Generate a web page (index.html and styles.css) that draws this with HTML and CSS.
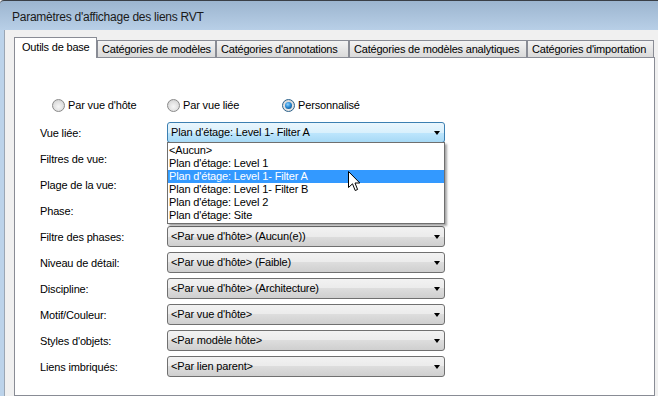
FILE: index.html
```html
<!DOCTYPE html>
<html lang="fr">

<head>
    <meta charset="UTF-8">
    <title>Paramètres d'affichage des liens RVT</title>
    <link rel="stylesheet" href="styles.css">
</head>

<body>
    <div class="window">
        <div class="titlebar">Paramètres d'affichage des liens RVT</div>

        <div class="dialog">
            <div class="tabs">
                <div class="tab active" style="width: 83px">Outils de base</div>
                <div class="tab" style="width: 119px">Catégories de modèles</div>
                <div class="tab" style="width: 133px">Catégories d'annotations</div>
                <div class="tab" style="width: 178px">Catégories de modèles analytiques</div>
                <div class="tab" style="width: 127px">Catégories d'importation</div>
            </div>

            <div class="panel">
                <div class="radios">
                    <label class="radio"><span class="dot"></span>Par vue d'hôte</label>
                    <label class="radio"><span class="dot"></span>Par vue liée</label>
                    <label class="radio"><span class="dot checked"></span>Personnalisé</label>
                </div>

                <div class="form">
                    <div class="label">Vue liée:</div>
                    <div class="combo focus">
                        Plan d'étage: Level 1- Filter A<span class="arrow"></span>
                        <!-- liste déroulante ouverte -->
                        <ul class="droplist">
                            <li>&lt;Aucun&gt;</li>
                            <li>Plan d'étage: Level 1</li>
                            <li class="selected">Plan d'étage: Level 1- Filter A</li>
                            <li>Plan d'étage: Level 1- Filter B</li>
                            <li>Plan d'étage: Level 2</li>
                            <li>Plan d'étage: Site</li>
                        </ul>
                    </div>

                    <!-- ces trois listes sont cachées sous la liste ouverte -->
                    <div class="label">Filtres de vue:</div>
                    <div class="combo"><span class="arrow"></span></div>

                    <div class="label">Plage de la vue:</div>
                    <div class="combo"><span class="arrow"></span></div>

                    <div class="label">Phase:</div>
                    <div class="combo"><span class="arrow"></span></div>

                    <div class="label">Filtre des phases:</div>
                    <div class="combo">&lt;Par vue d'hôte&gt; (Aucun(e))<span class="arrow"></span></div>

                    <div class="label">Niveau de détail:</div>
                    <div class="combo">&lt;Par vue d'hôte&gt; (Faible)<span class="arrow"></span></div>

                    <div class="label">Discipline:</div>
                    <div class="combo">&lt;Par vue d'hôte&gt; (Architecture)<span class="arrow"></span></div>

                    <div class="label">Motif/Couleur:</div>
                    <div class="combo">&lt;Par vue d'hôte&gt;<span class="arrow"></span></div>

                    <div class="label">Styles d'objets:</div>
                    <div class="combo">&lt;Par modèle hôte&gt;<span class="arrow"></span></div>

                    <div class="label">Liens imbriqués:</div>
                    <div class="combo">&lt;Par lien parent&gt;<span class="arrow"></span></div>
                </div>
            </div>
        </div>

        <!-- pointeur de souris -->
        <svg class="cursor" width="13" height="21" viewBox="0 0 13 21">
            <path d="M0.5 0.5 L0.5 16.5 L4.5 12.8 L7.2 19.5 L9.6 18.5 L7 12 L11.8 12 Z"
                fill="#fff" stroke="#000" stroke-width="1" stroke-linejoin="miter" />
        </svg>
    </div>
</body>

</html>
```

FILE: styles.css
```css
html,
body {
    margin: 0;
    padding: 0;
    background: #fff;
}

.window {
    position: relative;
    width: 658px;
    height: 396px;
    overflow: hidden;
    background-color: #f0f0f0;
    font-family: "Liberation Sans", Arial, sans-serif;
    font-size: 11px;
    letter-spacing: -0.15px;
    color: #000;
    display: flex;
    flex-direction: column;
}

.titlebar {
    height: 29px;
    border-top: 1px solid #3a3f46;
    border-top-left-radius: 4px;
    background: linear-gradient(#9cb5cf, #b8cfe7);
    padding-left: 12px;
    font-size: 12px;
    letter-spacing: -0.25px;
    line-height: 32px;
    color: #1a1a1a;
}

.dialog {
    flex: 1;
    border-left: 4px solid #bcd3ea;
    box-shadow: inset 1px 0 #9aa6b4;
    padding: 7px 3px 0 10px;
    display: flex;
    flex-direction: column;
}

/* onglets */
.tabs {
    display: flex;
    align-items: flex-end;
    margin-bottom: -1px;
    position: relative;
    z-index: 1;
}

.tab {
    box-sizing: border-box;
    height: 17px;
    margin-bottom: 1px;
    border: 1px solid #898c95;
    border-bottom: none;
    background: linear-gradient(#f3f3f3, #e6e6e6 50%, #dadada);
    padding-left: 4px;
    line-height: 16px;
    letter-spacing: -0.2px;
    white-space: nowrap;
    overflow: hidden;
}

.tab.active {
    height: 21px;
    margin-bottom: 0;
    background: #fff;
    padding-left: 7px;
    line-height: 19px;
}

.panel {
    flex: 1;
    background-color: #fff;
    border: 1px solid #898c95;
    padding: 40px 0 0 37px;
}

/* boutons radio */
.radios {
    display: flex;
    height: 13px;
    margin-top: 1px;
}

.radio {
    width: 115px;
    display: flex;
    align-items: center;
    gap: 3px;
    line-height: 13px;
}

.dot {
    box-sizing: border-box;
    width: 13px;
    height: 13px;
    border-radius: 50%;
    border: 1px solid #8a8a8a;
    background: radial-gradient(circle at 50% 60%, #f6f6f6 0, #e0e0e0 55%, #c8c8c8 100%);
    position: relative;
}

.dot.checked {
    border-color: #2c628b;
}

.dot.checked::after {
    content: "";
    position: absolute;
    left: 2px;
    top: 2px;
    width: 7px;
    height: 7px;
    border-radius: 50%;
    background: radial-gradient(circle at 40% 35%, #8fd3ff 0, #2a8ad4 45%, #0b3d6b 100%);
}

/* formulaire */
.form {
    margin: 10px 0 0 -12px;
    display: grid;
    grid-template-columns: 127px 278px;
    grid-auto-rows: 21px;
    row-gap: 5px;
    align-items: center;
}

.combo {
    position: relative;
    box-sizing: border-box;
    height: 21px;
    border: 1px solid #707070;
    border-radius: 3px;
    background: linear-gradient(#f2f2f2 0, #ebebeb 50%, #dddddd 50%, #cfcfcf 100%);
    padding-left: 3px;
    line-height: 19px;
    white-space: nowrap;
}

.combo.focus {
    border-color: #3c7fb1;
    background: linear-gradient(#eaf6fd 0, #d9f0fc 50%, #bee6fd 50%, #a7d9f5 100%);
    z-index: 2;
}

.arrow {
    position: absolute;
    right: 4px;
    top: 8px;
    width: 0;
    height: 0;
    border-left: 3.5px solid transparent;
    border-right: 3.5px solid transparent;
    border-top: 4px solid #000;
}

.droplist {
    position: absolute;
    left: -1px;
    top: 19px;
    width: 278px;
    box-sizing: border-box;
    margin: 0;
    padding: 1px 0 1px 0;
    list-style: none;
    background-color: #fff;
    border: 1px solid #6f6f6f;
    box-shadow: 2px 2px 2px rgba(0, 0, 0, 0.35);
}

.droplist li {
    height: 13px;
    line-height: 13px;
    padding-left: 1px;
}

.droplist li.selected {
    background-color: #3399ff;
    color: #fff;
}

.cursor {
    position: absolute;
    left: 348px;
    top: 171px;
    z-index: 5;
}
```
